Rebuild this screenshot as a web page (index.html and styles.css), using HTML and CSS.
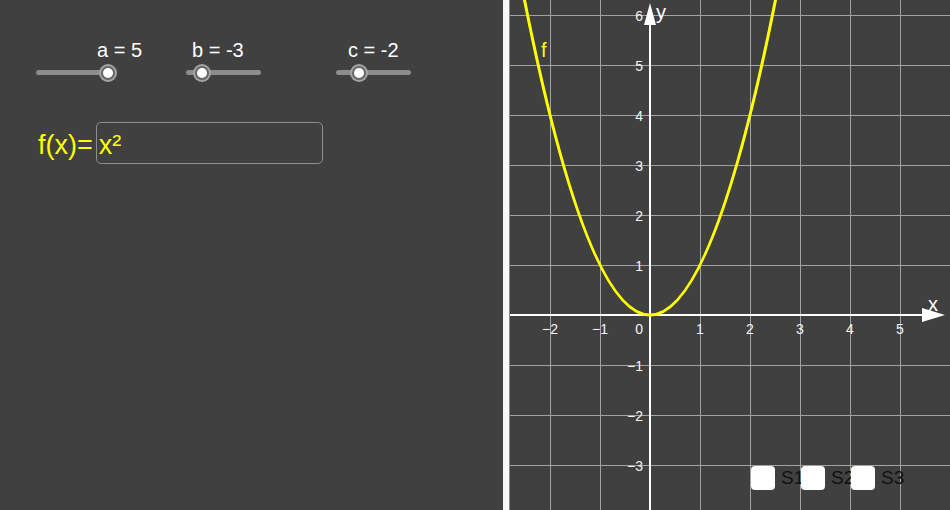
FILE: index.html
```html
<!DOCTYPE html>
<html>
<head>
<meta charset="utf-8">
<link rel="stylesheet" href="styles.css">
</head>
<body>
<div class="app">
  <div class="algebra">
    <div class="sliders">
      <div class="slider">
        <span class="slider-label label-a">a = 5</span>
        <div class="track"><span class="knob" style="left:72px"></span></div>
      </div>
      <div class="slider">
        <span class="slider-label label-b">b = -3</span>
        <div class="track"><span class="knob" style="left:16px"></span></div>
      </div>
      <div class="slider">
        <span class="slider-label label-c">c = -2</span>
        <div class="track"><span class="knob" style="left:23px"></span></div>
      </div>
    </div>
    <div class="func">
      <span class="fname">f(x)=</span>
      <div class="input">x²</div>
    </div>
  </div>
  <div class="divider"></div>
  <div class="graph">
    <svg class="plot" width="440" height="510" viewBox="0 0 440 510">
      <g class="grid">
        <line x1="40" y1="0" x2="40" y2="510"/>
        <line x1="90" y1="0" x2="90" y2="510"/>
        <line x1="190" y1="0" x2="190" y2="510"/>
        <line x1="240" y1="0" x2="240" y2="510"/>
        <line x1="290" y1="0" x2="290" y2="510"/>
        <line x1="340" y1="0" x2="340" y2="510"/>
        <line x1="390" y1="0" x2="390" y2="510"/>
        <line x1="0" y1="15" x2="440" y2="15"/>
        <line x1="0" y1="65" x2="440" y2="65"/>
        <line x1="0" y1="115" x2="440" y2="115"/>
        <line x1="0" y1="165" x2="440" y2="165"/>
        <line x1="0" y1="215" x2="440" y2="215"/>
        <line x1="0" y1="265" x2="440" y2="265"/>
        <line x1="0" y1="365" x2="440" y2="365"/>
        <line x1="0" y1="415" x2="440" y2="415"/>
        <line x1="0" y1="465" x2="440" y2="465"/>
      </g>
      <g class="axes">
        <line x1="0" y1="315" x2="414" y2="315"/>
        <line x1="140" y1="24" x2="140" y2="510"/>
      </g>
      <polygon class="arrow" points="412,308 435,315 412,322"/>
      <polygon class="arrow" points="134,25 140,3 146,25"/>
      <g class="ticks xt">
        <text x="40" y="334">−2</text>
        <text x="90" y="334">−1</text>
        <text x="190" y="334">1</text>
        <text x="240" y="334">2</text>
        <text x="290" y="334">3</text>
        <text x="340" y="334">4</text>
        <text x="390" y="334">5</text>
      </g>
      <g class="ticks yt">
        <text x="133" y="334">0</text>
        <text x="133" y="21">6</text>
        <text x="133" y="71">5</text>
        <text x="133" y="121">4</text>
        <text x="133" y="171">3</text>
        <text x="133" y="221">2</text>
        <text x="133" y="271">1</text>
        <text x="133" y="371">−1</text>
        <text x="133" y="421">−2</text>
        <text x="133" y="471">−3</text>
      </g>
      <text class="axis-label" x="146" y="19">y</text>
      <text class="axis-label" x="418" y="311">x</text>
      <path class="curve" d="M10,-23 Q140,653 270,-23"/>
      <text class="curve-label" x="31" y="57">f</text>
    </svg>
    <div class="checks">
      <div class="check"><span class="box"></span><span class="check-label">S1</span></div>
      <div class="check"><span class="box"></span><span class="check-label">S2</span></div>
      <div class="check"><span class="box"></span><span class="check-label">S3</span></div>
    </div>
  </div>
</div>
</body>
</html>
```
FILE: styles.css
```css
html, body {
  margin: 0;
  padding: 0;
  background: #404040;
}
.app {
  display: flex;
  width: 950px;
  height: 510px;
  overflow: hidden;
  font-family: "Liberation Sans", Arial, sans-serif;
}
.algebra {
  width: 503px;
  height: 510px;
  flex: none;
  box-sizing: border-box;
  padding-top: 40px;
  background: #404040;
}
.sliders {
  display: flex;
  gap: 75px;
  padding-left: 36px;
}
.slider {
  width: 75px;
  display: flex;
  flex-direction: column;
}
.slider-label {
  font-size: 20px;
  line-height: 20px;
  color: #ffffff;
  white-space: nowrap;
}
.label-a { margin-left: 61px; }
.label-b { margin-left: 6px; }
.label-c { margin-left: 12px; }
.track {
  position: relative;
  margin-top: 10px;
  height: 5px;
  border-radius: 3px;
  background: #8c8c8c;
}
.knob {
  position: absolute;
  top: -2.5px;
  width: 10px;
  height: 10px;
  margin-left: -5px;
  border-radius: 50%;
  background: #ffffff;
  box-shadow: 0 0 0 2px #666666, 0 0 0 4px #a3a3a3;
}
.func {
  display: flex;
  align-items: baseline;
  margin-top: 47px;
  padding-left: 38px;
}
.fname, .input {
  font-size: 27px;
  color: #ffff00;
}
.input {
  box-sizing: border-box;
  width: 227px;
  height: 42px;
  padding: 7px 0 0 2px;
  border: 1px solid #8e8e8e;
  border-radius: 5px;
  margin-left: 3px;
}
.divider {
  flex: none;
  width: 6px;
  background: #f7f7f7;
  border-right: 1px solid #8a8a8a;
}
.graph {
  position: relative;
  flex: none;
  width: 440px;
  height: 510px;
  background: #404040;
}
.plot {
  display: block;
}
.grid line {
  stroke: #a3a3a3;
  stroke-width: 1;
  shape-rendering: crispEdges;
}
.axes line {
  stroke: #ffffff;
  stroke-width: 2;
}
.arrow {
  fill: #ffffff;
}
.ticks text {
  font-family: "Liberation Sans", Arial, sans-serif;
  font-size: 14px;
  fill: #f4f4f4;
}
.xt text { text-anchor: middle; }
.yt text { text-anchor: end; }
.axis-label {
  font-family: "Liberation Sans", Arial, sans-serif;
  font-size: 20px;
  fill: #ffffff;
}
.curve {
  fill: none;
  stroke: #ffff00;
  stroke-width: 3;
}
.curve-label {
  font-family: "Liberation Sans", Arial, sans-serif;
  font-size: 20px;
  fill: #ffff00;
}
.checks {
  position: absolute;
  left: 241px;
  top: 466px;
  display: flex;
}
.check {
  display: flex;
  align-items: center;
  width: 50px;
}
.box {
  flex: none;
  width: 24px;
  height: 24px;
  border-radius: 4px;
  background: #ffffff;
}
.check-label {
  width: 20px;
  margin-left: 6px;
  font-size: 19px;
  color: #111111;
  white-space: nowrap;
}
```
